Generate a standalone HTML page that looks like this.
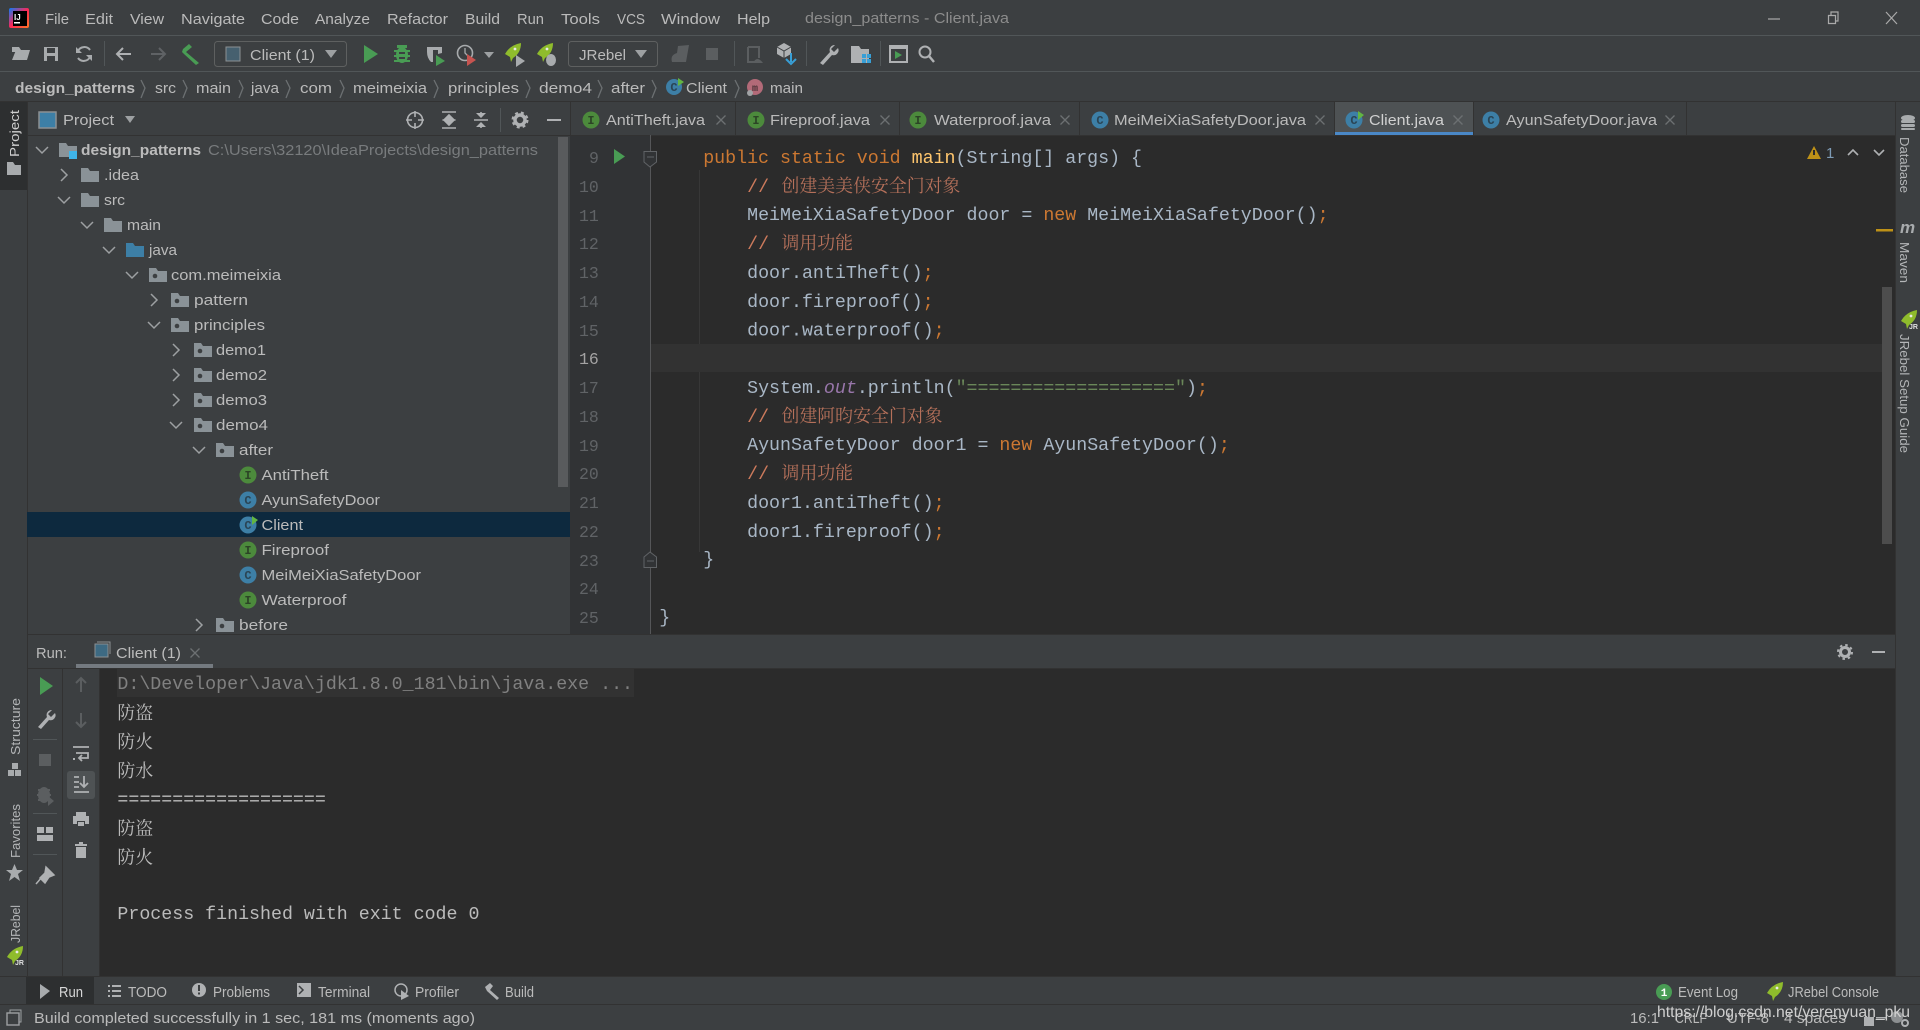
<!DOCTYPE html>
<html><head><meta charset="utf-8"><title>design_patterns - Client.java</title>
<style>
html,body{margin:0;padding:0;background:#3c3f41;overflow:hidden}
svg{display:block}
text{font-family:"Liberation Sans","Noto Sans CJK SC",sans-serif;font-size:15px;fill:#bbbbbb;white-space:pre}
.m{font-family:"Liberation Mono",monospace;font-size:18.3px;fill:#a9b7c6}
.k{fill:#cc7832}.s{fill:#6a8759}.f{fill:#ffc66d}.o{fill:#9876aa;font-style:italic}
.c{font-family:"Noto Serif CJK SC",serif;font-size:17.9px;fill:#b5705a}
.sl{fill:#cc7a5c}
.cn{font-family:"Noto Serif CJK SC",serif;font-size:17.9px;fill:#bbbbbb}
.n{font-family:"Liberation Mono",monospace;font-size:16.5px;fill:#606366}
.g{fill:#787b7d}
.b{font-family:"Liberation Mono",monospace;font-size:12px;font-weight:bold;text-anchor:middle}
.v{font-size:13px;fill:#b4b6b8}
.i{fill:none;stroke:#afb1b3;stroke-width:2}
.ch{fill:none;stroke:#9da0a2;stroke-width:1.5}
.x{fill:none;stroke:#6c7072;stroke-width:1.3}
.jr{font-size:7px;font-weight:bold;fill:#e0e0e0}
</style></head><body>
<svg xmlns="http://www.w3.org/2000/svg" width="1920" height="1030" viewBox="0 0 1920 1030">
<defs>
<path id="cr" class="ch" d="M-3 -6L3 0L-3 6"/>
<path id="cd" class="ch" d="M-6 -3L0 3L6 -3"/>
<path id="fo" fill="#8a9297" d="M0 -7H7L9 -4H18V7H0Z"/>
<g id="pk"><path fill="#8a9297" d="M0 -7H7L9 -4H18V7H0Z"/><circle cx="6" cy="1" r="2.3" fill="#3c3f41"/></g>
<g id="ro"><path fill="#8fbc2c" d="M0 10Q5 1 16 -1Q16 9 8 14L6 18L5 13Z"/><circle cx="10" cy="5" r="1.400" fill="#e8e8e8"/></g>
<path id="x" class="x" d="M-4.500 -4.500L4.500 4.500M4.500 -4.500L-4.500 4.500"/>
<linearGradient id="lg" x1="0" y1="0" x2="1" y2="1"><stop offset="0" stop-color="#087cfa"/><stop offset=".5" stop-color="#fe2857"/><stop offset="1" stop-color="#fd7522"/></linearGradient>
</defs>

<!-- base -->
<rect width="1920" height="1030" fill="#3c3f41"/>

<!-- title bar -->
<rect x="9" y="8" width="20" height="20" rx="2" fill="url(#lg)"/>
<rect x="13" y="11" width="14" height="15" fill="#000"/>
<text x="14" y="20" style="font-size:8px;font-weight:bold;fill:#fff">IJ</text>
<rect x="14" y="22" width="6" height="1.500" fill="#fff"/>
<text x="45" y="24" textLength="24" lengthAdjust="spacingAndGlyphs">File</text>
<text x="85" y="24" textLength="28" lengthAdjust="spacingAndGlyphs">Edit</text>
<text x="130" y="24" textLength="34" lengthAdjust="spacingAndGlyphs">View</text>
<text x="181" y="24" textLength="64" lengthAdjust="spacingAndGlyphs">Navigate</text>
<text x="261" y="24" textLength="38" lengthAdjust="spacingAndGlyphs">Code</text>
<text x="315" y="24" textLength="55" lengthAdjust="spacingAndGlyphs">Analyze</text>
<text x="387" y="24" textLength="61" lengthAdjust="spacingAndGlyphs">Refactor</text>
<text x="465" y="24" textLength="35" lengthAdjust="spacingAndGlyphs">Build</text>
<text x="517" y="24" textLength="27" lengthAdjust="spacingAndGlyphs">Run</text>
<text x="561" y="24" textLength="39" lengthAdjust="spacingAndGlyphs">Tools</text>
<text x="617" y="24" textLength="28" lengthAdjust="spacingAndGlyphs">VCS</text>
<text x="661" y="24" textLength="59" lengthAdjust="spacingAndGlyphs">Window</text>
<text x="737" y="24" textLength="33" lengthAdjust="spacingAndGlyphs">Help</text>
<text x="805" y="23" textLength="204" lengthAdjust="spacingAndGlyphs" style="fill:#8c8c8c">design_patterns - Client.java</text>
<path d="M1768 19H1780" stroke="#aaa" stroke-width="1.200"/>
<path d="M1828.500 15.500h7v8h-7zM1831 15v-3h7v9h-2.500" fill="none" stroke="#aaa" stroke-width="1.200"/>
<path d="M1886 12L1897 24M1897 12L1886 24" stroke="#aaa" stroke-width="1.200"/>
<rect y="35" width="1920" height="1" fill="#515658"/>

<!-- toolbar -->
<path d="M12 47V60H27L30 50H16L12 60" fill="#a8abad"/><path d="M12 47H19L21 50H26V52H12Z" fill="#a8abad"/>
<path d="M44 47H58V61H44Z" fill="#a8abad"/><rect x="47" y="48" width="8" height="5" fill="#3c3f41"/><rect x="47" y="56" width="8" height="5" fill="#3c3f41"/>
<path d="M90 50A7 7 0 0 0 78 51M78 58A7 7 0 0 0 90 57" fill="none" stroke="#a8abad" stroke-width="2"/><path d="M76 47V53H82Z M92 61V55H86Z" fill="#a8abad"/>
<rect x="104" y="41" width="1" height="25" fill="#515658"/>
<path d="M131 54H117M123 48L117 54L123 60" fill="none" stroke="#afb1b3" stroke-width="2"/>
<path d="M151 54H165M159 48L165 54L159 60" fill="none" stroke="#5f6265" stroke-width="2"/>
<path d="M183 49L189 44L192 47L186 52L199 63L196 65L184 54L182 52Z" fill="#499c54"/>
<rect x="214.500" y="41.500" width="132" height="25" rx="3" fill="none" stroke="#5e6060"/>
<rect x="226" y="47" width="14" height="14" fill="#46606f" stroke="#8c9093"/>
<text x="250" y="60" textLength="65" lengthAdjust="spacingAndGlyphs">Client (1)</text>
<path d="M325 50H337L331 58Z" fill="#9da0a2"/>
<path d="M364 45L378 54L364 63Z" fill="#499c54"/>
<g fill="#499c54"><ellipse cx="402" cy="55" rx="6" ry="8"/><rect x="394" y="50" width="16" height="2"/><rect x="394" y="55" width="16" height="2"/><rect x="394" y="60" width="16" height="2"/><rect x="397" y="45" width="10" height="3"/></g><rect x="399" y="52" width="6" height="2" fill="#3c3f41"/><rect x="399" y="57" width="6" height="2" fill="#3c3f41"/>
<path d="M427 47H442V53L438 54V50H433V62H431Q427 58 427 52Z" fill="#a8abad"/><path d="M436 55L445 61L436 66Z" fill="#499c54"/>
<circle cx="465" cy="53" r="7.500" fill="none" stroke="#a8abad" stroke-width="1.600"/><path d="M465 48V53L468 56" fill="none" stroke="#a8abad" stroke-width="1.300"/><path d="M467 54L476 60L467 66Z" fill="#c75450"/>
<path d="M484 52H494L489 58Z" fill="#9da0a2"/>
<use href="#ro" x="505" y="44"/><path d="M516 55L525 61L516 67Z" fill="#a8abad"/>
<use href="#ro" x="537" y="44"/><ellipse cx="551" cy="60" rx="5" ry="6" fill="#a8abad"/>
<rect x="568.500" y="41.500" width="89" height="25" rx="3" fill="none" stroke="#5e6060"/>
<text x="579" y="60" textLength="47" lengthAdjust="spacingAndGlyphs">JRebel</text>
<path d="M635 50H647L641 58Z" fill="#9da0a2"/>
<path d="M672 62Q670 55 677 53L678 46L689 45L686 62Z" fill="#5b5e60"/>
<rect x="706" y="48" width="12" height="12" fill="#5b5e60"/>
<rect x="734" y="41" width="1" height="25" fill="#515658"/>
<path d="M748 47H759V58M748 47V62H755" fill="none" stroke="#5b5e60" stroke-width="2"/><path d="M753 63Q757 55 763 63Z" fill="#5b5e60"/>
<path d="M777 47L784 43L791 47V54L784 58L777 54Z" fill="#afb1b3"/><path d="M777 47L784 51L791 47M784 51V58" fill="none" stroke="#3c3f41"/>
<path d="M791 53V62M786 59L791 64L796 59" fill="none" stroke="#389fd6" stroke-width="2"/>
<rect x="806" y="41" width="1" height="25" fill="#515658"/>
<path d="M820 63L830 52A5 5 0 0 1 835 45L831 49L834 52L838 48A5 5 0 0 1 832 55L823 65Z" fill="#afb1b3"/>
<path d="M851 46H859L861 49H869V63H851Z" fill="#afb1b3"/><g fill="#389fd6"><rect x="862" y="54" width="4" height="4"/><rect x="867" y="54" width="4" height="4"/><rect x="862" y="59" width="4" height="4"/><rect x="867" y="59" width="4" height="4"/></g>
<rect x="880" y="41" width="1" height="25" fill="#515658"/>
<rect x="890" y="46" width="17" height="16" fill="none" stroke="#afb1b3" stroke-width="2"/><rect x="890" y="46" width="17" height="3" fill="#afb1b3"/><path d="M895 51L902 55L895 59Z" fill="#499c54"/>
<circle cx="925" cy="52" r="5.500" fill="none" stroke="#afb1b3" stroke-width="2"/><path d="M929 56L934 62" stroke="#afb1b3" stroke-width="2.400"/>
<rect y="71" width="1920" height="1" fill="#515658"/>

<!-- breadcrumb -->
<text x="15" y="93" textLength="120" lengthAdjust="spacingAndGlyphs" style="font-weight:bold">design_patterns</text>
<text x="155" y="93" textLength="21" lengthAdjust="spacingAndGlyphs">src</text>
<text x="196" y="93" textLength="35" lengthAdjust="spacingAndGlyphs">main</text>
<text x="251" y="93" textLength="28" lengthAdjust="spacingAndGlyphs">java</text>
<text x="300" y="93" textLength="32" lengthAdjust="spacingAndGlyphs">com</text>
<text x="353" y="93" textLength="74" lengthAdjust="spacingAndGlyphs">meimeixia</text>
<text x="448" y="93" textLength="71" lengthAdjust="spacingAndGlyphs">principles</text>
<text x="539" y="93" textLength="53" lengthAdjust="spacingAndGlyphs">demo4</text>
<text x="611" y="93" textLength="34" lengthAdjust="spacingAndGlyphs">after</text>
<text x="686" y="93" textLength="41" lengthAdjust="spacingAndGlyphs">Client</text>
<text x="770" y="93" textLength="33" lengthAdjust="spacingAndGlyphs">main</text>
<g class="x" fill="none" stroke="#5f6365" stroke-width="1"><path d="M141 80L145 88L141 98M183 80L187 88L183 98M239 80L243 88L239 98M286 80L290 88L286 98M340 80L344 88L340 98M434 80L438 88L434 98M526 80L530 88L526 98M598 80L602 88L598 98M652 80L656 88L652 98M735 80L739 88L735 98"/></g>
<circle cx="674" cy="87" r="8" fill="#3d7fa6"/><text class="b" x="674" y="91" style="fill:#2a4454">C</text><path d="M678 78L684 82L678 86Z" fill="#62b543"/>
<circle cx="755" cy="87" r="8" fill="#b26a78"/><text class="b" x="755" y="91" style="fill:#4b3237;font-size:10px">m</text><circle cx="750" cy="93" r="3" fill="#a0a3a5"/>
<rect y="101" width="1920" height="1" fill="#323232"/>

<!-- left stripe -->
<rect x="0" y="102" width="27" height="88" fill="#2d2f30"/>
<text class="v" transform="translate(19,157) rotate(-90)" textLength="47" lengthAdjust="spacingAndGlyphs" style="fill:#d0d0d0">Project</text>
<path d="M7 162H13L15 165H21V175H7Z" fill="#a8abad"/>
<rect x="27" y="102" width="1" height="874" fill="#323232"/>
<text class="v" transform="translate(20,755) rotate(-90)" textLength="57" lengthAdjust="spacingAndGlyphs">Structure</text>
<g fill="#a8abad"><rect x="12" y="763" width="6" height="6"/><rect x="8" y="770" width="6" height="6"/><rect x="15" y="770" width="6" height="6"/></g>
<text class="v" transform="translate(20,858) rotate(-90)" textLength="54" lengthAdjust="spacingAndGlyphs">Favorites</text>
<path d="M14.500 864L17 870H23L18 874L20 881L14.500 877L9 881L11 874L6 870H12Z" fill="#a8abad"/>
<text class="v" transform="translate(20,943) rotate(-90)" textLength="38" lengthAdjust="spacingAndGlyphs">JRebel</text>
<use href="#ro" x="7" y="947"/><text class="jr" x="15" y="965">JR</text>

<!-- project header -->
<rect x="39" y="112" width="17" height="16" fill="#3d7fa6" stroke="#8c9093" stroke-width="1.500"/>
<text x="63" y="125" textLength="51" lengthAdjust="spacingAndGlyphs">Project</text>
<path d="M125 116H135L130 123Z" fill="#9da0a2"/>
<circle cx="415" cy="120" r="7.500" fill="none" stroke="#afb1b3" stroke-width="1.600"/><path d="M415 111V117M415 123V129M406 120H412M418 120H424" stroke="#afb1b3" stroke-width="1.600"/>
<path d="M442 112H456M442 128H456M449 115L444 120H454ZM449 125L444 120H454Z" stroke="#afb1b3" stroke-width="1.600" fill="#afb1b3"/>
<path d="M474 120H488M481 112V116M481 124V128" stroke="#afb1b3" stroke-width="1.600"/><path d="M476 113H486L481 118ZM476 127H486L481 122Z" fill="#afb1b3"/>
<rect x="500" y="108" width="1" height="24" fill="#515658"/>
<circle cx="520" cy="120" r="5" fill="none" stroke="#afb1b3" stroke-width="3.500"/><circle cx="520" cy="120" r="7.500" fill="none" stroke="#afb1b3" stroke-width="2" stroke-dasharray="3 3"/>
<rect x="547" y="119" width="14" height="2" fill="#afb1b3"/>
<rect x="27" y="135" width="543" height="1" fill="#323232"/>

<!-- tree -->
<rect x="27" y="512" width="543" height="25" fill="#0d293e"/>
<use href="#cd" x="42" y="150"/><path fill="#8a9297" d="M59 143H66L68 146H77V157H59Z"/><rect x="69" y="151" width="8" height="8" fill="#3fb4e8"/>
<text x="81" y="155" textLength="120" lengthAdjust="spacingAndGlyphs" style="font-weight:bold">design_patterns</text>
<text x="208" y="155" textLength="330" lengthAdjust="spacingAndGlyphs" class="g">C:\Users\32120\IdeaProjects\design_patterns</text>
<use href="#cr" x="64" y="175"/><use href="#fo" x="81" y="175"/><text x="104" y="180" textLength="35" lengthAdjust="spacingAndGlyphs">.idea</text>
<use href="#cd" x="64" y="200"/><use href="#fo" x="81" y="200"/><text x="104" y="205" textLength="21" lengthAdjust="spacingAndGlyphs">src</text>
<use href="#cd" x="87" y="225"/><use href="#fo" x="104" y="225"/><text x="127" y="230" textLength="34" lengthAdjust="spacingAndGlyphs">main</text>
<use href="#cd" x="109" y="250"/><path fill="#3d7fa6" d="M126 243H133L135 246H144V257H126Z"/><text x="149" y="255" textLength="28" lengthAdjust="spacingAndGlyphs">java</text>
<use href="#cd" x="132" y="275"/><use href="#pk" x="149" y="275"/><text x="171" y="280" textLength="110" lengthAdjust="spacingAndGlyphs">com.meimeixia</text>
<use href="#cr" x="154" y="300"/><use href="#pk" x="171" y="300"/><text x="194" y="305" textLength="54" lengthAdjust="spacingAndGlyphs">pattern</text>
<use href="#cd" x="154" y="325"/><use href="#pk" x="171" y="325"/><text x="194" y="330" textLength="71" lengthAdjust="spacingAndGlyphs">principles</text>
<use href="#cr" x="176" y="350"/><use href="#pk" x="194" y="350"/><text x="216" y="355" textLength="50" lengthAdjust="spacingAndGlyphs">demo1</text>
<use href="#cr" x="176" y="375"/><use href="#pk" x="194" y="375"/><text x="216" y="380" textLength="51" lengthAdjust="spacingAndGlyphs">demo2</text>
<use href="#cr" x="176" y="400"/><use href="#pk" x="194" y="400"/><text x="216" y="405" textLength="51" lengthAdjust="spacingAndGlyphs">demo3</text>
<use href="#cd" x="176" y="425"/><use href="#pk" x="194" y="425"/><text x="216" y="430" textLength="52" lengthAdjust="spacingAndGlyphs">demo4</text>
<use href="#cd" x="199" y="450"/><use href="#pk" x="216" y="450"/><text x="239" y="455" textLength="34" lengthAdjust="spacingAndGlyphs">after</text>
<circle cx="248" cy="475" r="8.500" fill="#4c8a3c"/><text class="b" x="248" y="479" style="fill:#2c4426">I</text>
<text x="261.500" y="480" textLength="67" lengthAdjust="spacingAndGlyphs">AntiTheft</text>
<circle cx="248" cy="500" r="8.500" fill="#3d7fa6"/><text class="b" x="248" y="504" style="fill:#2a4454">C</text>
<text x="261.500" y="505" textLength="118.500" lengthAdjust="spacingAndGlyphs">AyunSafetyDoor</text>
<circle cx="248" cy="525" r="8.500" fill="#3d7fa6"/><text class="b" x="248" y="529" style="fill:#2a4454">C</text><path d="M252 516L258 520L252 525Z" fill="#62b543"/>
<text x="261.500" y="530" textLength="41.500" lengthAdjust="spacingAndGlyphs">Client</text>
<circle cx="248" cy="550" r="8.500" fill="#4c8a3c"/><text class="b" x="248" y="554" style="fill:#2c4426">I</text>
<text x="261.500" y="555" textLength="67.500" lengthAdjust="spacingAndGlyphs">Fireproof</text>
<circle cx="248" cy="575" r="8.500" fill="#3d7fa6"/><text class="b" x="248" y="579" style="fill:#2a4454">C</text>
<text x="261.500" y="580" textLength="159.500" lengthAdjust="spacingAndGlyphs">MeiMeiXiaSafetyDoor</text>
<circle cx="248" cy="600" r="8.500" fill="#4c8a3c"/><text class="b" x="248" y="604" style="fill:#2c4426">I</text>
<text x="261.500" y="605" textLength="85" lengthAdjust="spacingAndGlyphs">Waterproof</text>
<use href="#cr" x="199" y="625"/><use href="#pk" x="216" y="625"/><text x="239" y="630" textLength="49" lengthAdjust="spacingAndGlyphs">before</text>
<rect x="558" y="137" width="10" height="350" fill="#595b5d"/>

<!-- tabs -->
<rect x="570" y="102" width="1325" height="33" fill="#3c3f41"/>
<rect x="1334" y="102" width="139" height="33" fill="#4e5254"/>
<rect x="1334" y="132" width="139" height="3" fill="#4a88c7"/>
<g fill="#323232"><rect x="570" y="102" width="1" height="33"/><rect x="735" y="102" width="1" height="33"/><rect x="899" y="102" width="1" height="33"/><rect x="1079" y="102" width="1" height="33"/><rect x="1334" y="102" width="1" height="33"/><rect x="1473" y="102" width="1" height="33"/><rect x="1686" y="102" width="1" height="33"/></g>
<circle cx="591" cy="120" r="8.500" fill="#4c8a3c"/><text class="b" x="591" y="124" style="fill:#2c4426">I</text>
<text x="606" y="125" textLength="99" lengthAdjust="spacingAndGlyphs">AntiTheft.java</text><use href="#x" x="721" y="120"/>
<circle cx="756" cy="120" r="8.500" fill="#4c8a3c"/><text class="b" x="756" y="124" style="fill:#2c4426">I</text>
<text x="770" y="125" textLength="100" lengthAdjust="spacingAndGlyphs">Fireproof.java</text><use href="#x" x="885" y="120"/>
<circle cx="918" cy="120" r="8.500" fill="#4c8a3c"/><text class="b" x="918" y="124" style="fill:#2c4426">I</text>
<text x="934" y="125" textLength="117" lengthAdjust="spacingAndGlyphs">Waterproof.java</text><use href="#x" x="1065" y="120"/>
<circle cx="1100" cy="120" r="8.500" fill="#3d7fa6"/><text class="b" x="1100" y="124" style="fill:#2a4454">C</text>
<text x="1114" y="125" textLength="192" lengthAdjust="spacingAndGlyphs">MeiMeiXiaSafetyDoor.java</text><use href="#x" x="1320" y="120"/>
<circle cx="1354" cy="120" r="8.500" fill="#3d7fa6"/><text class="b" x="1354" y="124" style="fill:#2a4454">C</text><path d="M1358 111L1364 115L1358 120Z" fill="#62b543"/>
<text x="1369" y="125" textLength="75" lengthAdjust="spacingAndGlyphs" style="fill:#d0d0d0">Client.java</text><use href="#x" x="1458" y="120"/>
<circle cx="1491" cy="120" r="8.500" fill="#3d7fa6"/><text class="b" x="1491" y="124" style="fill:#2a4454">C</text>
<text x="1506" y="125" textLength="151" lengthAdjust="spacingAndGlyphs">AyunSafetyDoor.java</text><use href="#x" x="1670" y="120"/>

<!-- editor -->
<rect x="570" y="135" width="1325" height="500" fill="#2b2b2b"/>
<rect x="570" y="135" width="81" height="500" fill="#313335"/>
<rect x="570" y="135" width="1325" height="1" fill="#323232"/>
<rect x="650" y="135" width="1" height="500" fill="#555658"/>
<rect x="651" y="344" width="1231" height="28" fill="#323232"/>
<rect x="699" y="170" width="1" height="174" fill="#373737"/><rect x="699" y="372" width="1" height="180" fill="#373737"/>
<path d="M614 149L625 156.500L614 164Z" fill="#499c54"/>
<path d="M644 151.500H656.500V162L650 167L644 162Z" fill="#313335" stroke="#606366"/><path d="M647 157H654" stroke="#606366"/>
<path d="M644 567.500H656.500V557L650 552L644 557Z" fill="#313335" stroke="#606366"/><path d="M647 561H654" stroke="#606366"/>

<g>
<text class="n" x="589" y="163" style="fill:#606366">9</text>
<text class="n" x="579" y="192">10</text><text class="n" x="579" y="221">11</text><text class="n" x="579" y="249">12</text><text class="n" x="579" y="278">13</text><text class="n" x="579" y="307">14</text><text class="n" x="579" y="336">15</text>
<text class="n" x="579" y="364" style="fill:#a4a3a3">16</text>
<text class="n" x="579" y="393">17</text><text class="n" x="579" y="422">18</text><text class="n" x="579" y="451">19</text><text class="n" x="579" y="479">20</text><text class="n" x="579" y="508">21</text><text class="n" x="579" y="537">22</text><text class="n" x="579" y="566">23</text><text class="n" x="579" y="594">24</text><text class="n" x="579" y="623">25</text>
</g>

<text class="m" x="703.200" y="163"><tspan class="k">public static void </tspan><tspan class="f">main</tspan>(String[] args) {</text>
<text class="m sl" x="747.100" y="192">//</text><text class="c" x="781.500" y="192">创建美美侠安全门对象</text>
<text class="m" x="747.100" y="220">MeiMeiXiaSafetyDoor door = <tspan class="k">new </tspan>MeiMeiXiaSafetyDoor()<tspan class="k">;</tspan></text>
<text class="m sl" x="747.100" y="249">//</text><text class="c" x="781.500" y="249">调用功能</text>
<text class="m" x="747.100" y="278">door.antiTheft()<tspan class="k">;</tspan></text>
<text class="m" x="747.100" y="307">door.fireproof()<tspan class="k">;</tspan></text>
<text class="m" x="747.100" y="335.500">door.waterproof()<tspan class="k">;</tspan></text>
<text class="m" x="747.100" y="393">System.<tspan class="o">out</tspan>.println(<tspan class="s">"==================="</tspan>)<tspan class="k">;</tspan></text>
<text class="m sl" x="747.100" y="422">//</text><text class="c" x="781.500" y="422">创建阿昀安全门对象</text>
<text class="m" x="747.100" y="450">AyunSafetyDoor door1 = <tspan class="k">new </tspan>AyunSafetyDoor()<tspan class="k">;</tspan></text>
<text class="m sl" x="747.100" y="479">//</text><text class="c" x="781.500" y="479">调用功能</text>
<text class="m" x="747.100" y="508">door1.antiTheft()<tspan class="k">;</tspan></text>
<text class="m" x="747.100" y="537">door1.fireproof()<tspan class="k">;</tspan></text>
<text class="m" x="703.200" y="564.500">}</text>
<text class="m" x="659.300" y="622.500">}</text>

<!-- editor right -->
<path d="M1814 146L1821 159H1807Z" fill="#be9117"/><rect x="1813" y="150" width="2" height="5" fill="#2b2b2b"/>
<text x="1826" y="158" style="fill:#7e9bb5">1</text>
<path d="M1848 155L1853 150L1858 155M1874 150L1879 155L1884 150" fill="none" stroke="#afb1b3" stroke-width="1.600"/>
<rect x="1876" y="229" width="17" height="2.500" fill="#be9117"/>
<rect x="1882" y="287" width="10" height="257" fill="#4d4d4d"/>

<!-- right stripe -->
<rect x="1895" y="102" width="25" height="874" fill="#3c3f41"/>
<rect x="1895" y="102" width="1" height="874" fill="#323232"/>
<g fill="#a8abad"><ellipse cx="1908" cy="118" rx="7" ry="3"/><rect x="1901" y="120" width="14" height="3" rx="1.500"/><rect x="1901" y="124" width="14" height="3" rx="1.500"/><rect x="1901" y="128" width="14" height="2" rx="1"/></g>
<text class="v" transform="translate(1900,137) rotate(90)" textLength="56" lengthAdjust="spacingAndGlyphs">Database</text>
<text x="1900" y="233" style="font-size:17px;font-weight:bold;font-style:italic;fill:#a8abad">m</text>
<text class="v" transform="translate(1900,242) rotate(90)" textLength="41" lengthAdjust="spacingAndGlyphs">Maven</text>
<use href="#ro" x="1901" y="311"/><text class="jr" x="1909" y="329">JR</text>
<text class="v" transform="translate(1900,334) rotate(90)" textLength="119" lengthAdjust="spacingAndGlyphs">JRebel Setup Guide</text>

<!-- run header -->
<rect x="28" y="635" width="1867" height="33" fill="#3c3f41"/>
<rect x="27" y="634" width="1868" height="1" fill="#323232"/>
<text x="36" y="658" textLength="31" lengthAdjust="spacingAndGlyphs">Run:</text>
<rect x="95" y="644" width="13" height="13" fill="#3d6a83" stroke="#8c9093"/><path d="M97 642H110V654" fill="none" stroke="#8c9093"/>
<text x="116" y="658" textLength="65" lengthAdjust="spacingAndGlyphs">Client (1)</text><use href="#x" x="195" y="653"/>
<rect x="76" y="664" width="137" height="4" fill="#747a80"/>
<circle cx="1845" cy="652" r="4.500" fill="none" stroke="#afb1b3" stroke-width="3"/><circle cx="1845" cy="652" r="7" fill="none" stroke="#afb1b3" stroke-width="2" stroke-dasharray="2.500 3"/>
<rect x="1872" y="651" width="13" height="2" fill="#afb1b3"/>
<rect x="27" y="668" width="1868" height="1" fill="#323232"/>

<!-- run toolbars -->
<rect x="62" y="669" width="1" height="307" fill="#323232"/>
<rect x="99" y="669" width="1796" height="307" fill="#2b2b2b"/>
<rect x="99" y="669" width="1" height="307" fill="#323232"/>
<path d="M40 677L53 686L40 695Z" fill="#499c54"/>
<path d="M38 727L47 717A5 5 0 0 1 52 710L48 714L51 717L55 713A5 5 0 0 1 49 720L41 729Z" fill="#afb1b3"/>
<rect x="33" y="739" width="24" height="1" fill="#515658"/>
<rect x="39" y="754" width="12" height="12" fill="#5b5e60"/>
<ellipse cx="44" cy="795" rx="6" ry="8" fill="#5b5e60"/><path d="M38 790H50M37 795H51M38 800H50" stroke="#5b5e60" stroke-width="2"/><path d="M48 796L54 801L48 806Z" fill="#5b5e60"/>
<rect x="33" y="813" width="24" height="1" fill="#515658"/>
<path d="M37 827H44V833H37ZM46 827H53V833H46ZM37 835H53V841H37Z" fill="#afb1b3"/>
<rect x="33" y="854" width="24" height="1" fill="#515658"/>
<path d="M46 867L54 875L49 877L45 883L40 878L45 873ZM42 877L36 884" fill="#afb1b3" stroke="#afb1b3" stroke-width="1.500"/>
<path d="M81 692V678M76 683L81 678L86 683" fill="none" stroke="#5b5e60" stroke-width="2"/>
<path d="M81 713V727M76 722L81 727L86 722" fill="none" stroke="#5b5e60" stroke-width="2"/>
<path d="M73 747H89M76 753H88V758H79M82 755L79 758L82 761" fill="none" stroke="#afb1b3" stroke-width="1.800"/><rect x="73" y="758" width="2" height="2" fill="#afb1b3"/>
<rect x="67" y="771" width="28" height="28" rx="3" fill="#4e5254"/>
<path d="M74 777H79M74 782H79M74 787H79M74 792H89M84 776V787M80 783L84 787L88 783" fill="none" stroke="#afb1b3" stroke-width="1.800"/>
<path d="M76 812H86V816H89V824H85V821H77V824H73V816H76ZM78 822H84V826H78Z" fill="#afb1b3"/>
<path d="M75 844H87V846H75ZM76 847H86V858H76ZM79 842H83V844H79Z" fill="#afb1b3"/>

<!-- console -->
<rect x="117" y="668" width="517" height="29" fill="#323232"/>
<text class="m" x="117.400" y="689" style="fill:#808080">D:\Developer\Java\jdk1.8.0_181\bin\java.exe ...</text>
<text class="cn" x="117.400" y="719">防盗</text>
<text class="cn" x="117.400" y="748">防火</text>
<text class="cn" x="117.400" y="777">防水</text>
<text class="m" x="117.400" y="804.500" style="fill:#bbb">===================</text>
<text class="cn" x="117.400" y="834.500">防盗</text>
<text class="cn" x="117.400" y="863.500">防火</text>
<text class="m" x="117.400" y="919" style="fill:#bbb">Process finished with exit code 0</text>

<!-- bottom tool bar -->
<rect x="0" y="976" width="1920" height="1" fill="#323232"/>
<rect x="26" y="977" width="68" height="27" fill="#2d2f30"/>
<path d="M40 984L50 991L40 999Z" fill="#a8abad"/>
<text x="59" y="997" textLength="24" lengthAdjust="spacingAndGlyphs" style="fill:#d8d8d8">Run</text>
<path d="M108 985h2v2h-2zM108 990h2v2h-2zM108 995h2v2h-2zM112 985h9v2h-9zM112 990h9v2h-9zM112 995h9v2h-9z" fill="#afb1b3"/>
<text x="128" y="997" textLength="39" lengthAdjust="spacingAndGlyphs">TODO</text>
<circle cx="199" cy="990" r="7" fill="#afb1b3"/><rect x="198" y="985" width="2" height="6" fill="#3c3f41"/><rect x="198" y="992.500" width="2" height="2" fill="#3c3f41"/>
<text x="213" y="997" textLength="57" lengthAdjust="spacingAndGlyphs">Problems</text>
<rect x="297" y="983" width="14" height="14" fill="#afb1b3"/><path d="M299 986L303 990L299 994" fill="none" stroke="#3c3f41" stroke-width="1.500"/>
<text x="318" y="997" textLength="52" lengthAdjust="spacingAndGlyphs">Terminal</text>
<circle cx="401" cy="990" r="6" fill="none" stroke="#afb1b3" stroke-width="1.500"/><path d="M401 990L409 996L401 1000Z" fill="#afb1b3"/>
<text x="415" y="997" textLength="44" lengthAdjust="spacingAndGlyphs">Profiler</text>
<path d="M485 987L490 983L493 986L490 990L499 998L497 1000L487 991Z" fill="#afb1b3"/>
<text x="505" y="997" textLength="29" lengthAdjust="spacingAndGlyphs">Build</text>
<circle cx="1664" cy="992" r="8" fill="#499c54"/><text class="b" x="1664" y="996" style="fill:#fff;font-size:11px">1</text>
<text x="1678" y="997" textLength="60" lengthAdjust="spacingAndGlyphs">Event Log</text>
<use href="#ro" x="1767" y="983"/>
<text x="1788" y="997" textLength="91" lengthAdjust="spacingAndGlyphs">JRebel Console</text>

<!-- status bar -->
<rect x="0" y="1004" width="1920" height="1" fill="#323232"/>
<rect x="7" y="1013" width="12" height="12" fill="none" stroke="#9da0a2" stroke-width="1.400"/><path d="M10 1013V1010H21V1022H19" fill="none" stroke="#9da0a2"/>
<text x="34" y="1023" textLength="441" lengthAdjust="spacingAndGlyphs">Build completed successfully in 1 sec, 181 ms (moments ago)</text>
<text x="1630" y="1023" textLength="29" lengthAdjust="spacingAndGlyphs">16:1</text>
<text x="1675" y="1023" textLength="32" lengthAdjust="spacingAndGlyphs">CRLF</text>
<text x="1727" y="1023" textLength="42" lengthAdjust="spacingAndGlyphs">UTF-8</text>
<text x="1784" y="1023" textLength="62" lengthAdjust="spacingAndGlyphs">4 spaces</text>
<rect x="1864" y="1017" width="10" height="9" fill="#afb1b3"/><rect x="1876" y="1017" width="10" height="1.500" fill="#afb1b3"/>
<circle cx="1897" cy="1017" r="6" fill="#8c8f91"/><circle cx="1905" cy="1023" r="3" fill="none" stroke="#afb1b3" stroke-width="2"/>
<text x="1657" y="1017" textLength="253" lengthAdjust="spacingAndGlyphs" style="font-size:16px;fill:#cfcfcf">https://blog.csdn.net/yerenyuan_pku</text>
</svg>
</body></html>
